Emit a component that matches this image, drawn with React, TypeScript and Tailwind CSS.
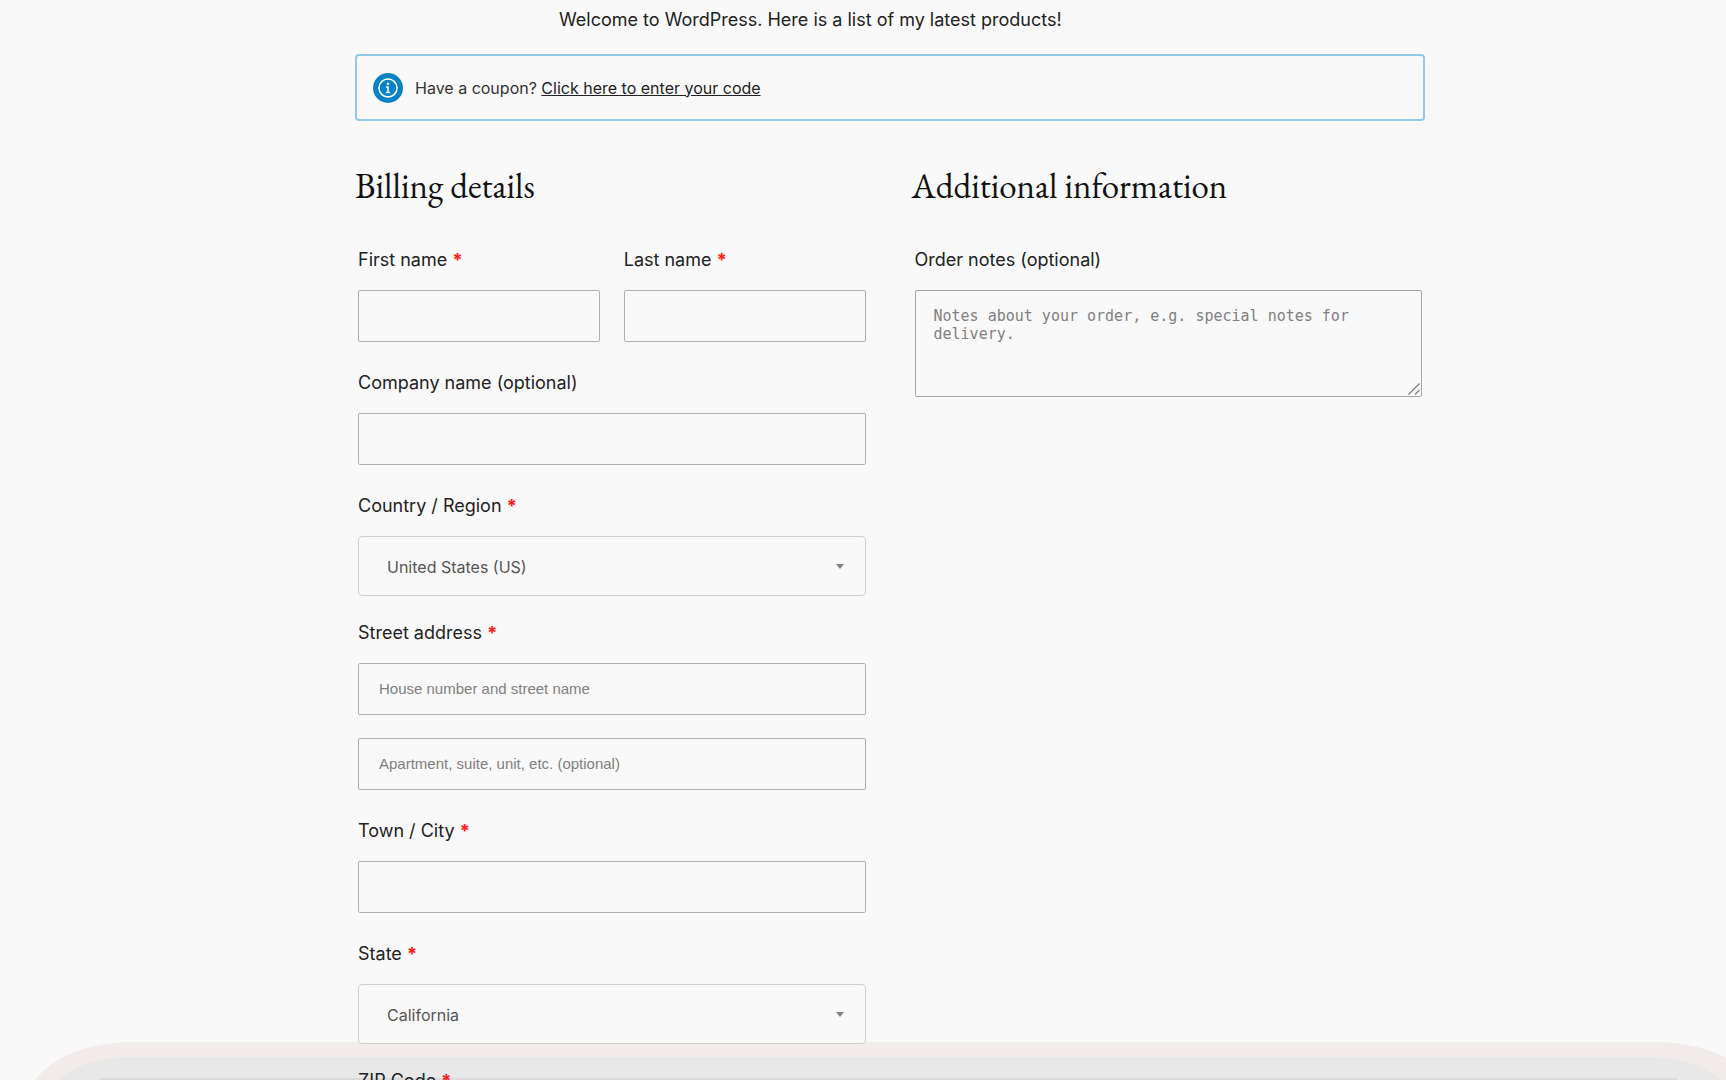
import type { ReactNode } from "react";

const inputClass =
  "block h-[52px] w-full rounded-xs border border-[#aeb0b0] bg-transparent px-5 pb-0.5 font-['Liberation_Sans',Arial,sans-serif] text-[15px] text-[#333] placeholder:text-[#808080] placeholder:opacity-100";

function Label({ htmlFor, required, children }: { htmlFor: string; required?: boolean; children: ReactNode }) {
  return (
    <label htmlFor={htmlFor} className="mb-[14px] block text-lg leading-8">
      {children}
      {required && <span className="ml-px font-extrabold text-[#ff1f1f]"> *</span>}
    </label>
  );
}

function TextField({ id, label, required }: { id: string; label: string; required?: boolean }) {
  return (
    <div className="mb-[25px]">
      <Label htmlFor={id} required={required}>{label}</Label>
      <input id={id} type="text" className={inputClass} />
    </div>
  );
}

function SelectField({ id, label, option }: { id: string; label: string; option: string }) {
  return (
    <div className="mb-[21px]">
      <Label htmlFor={id} required>{label}</Label>
      <div className="relative">
        <select
          id={id}
          className="block h-[60px] w-full appearance-none rounded-sm border border-[#cfd0d0] bg-[#f9f9f9] px-7 pt-0.5 text-base text-[#555]"
        >
          <option>{option}</option>
        </select>
        <svg viewBox="0 0 8 5" className="pointer-events-none absolute top-7 right-[22px] h-[5px] w-2" aria-hidden="true">
          <path d="M0 0h8L4 5z" fill="#858585" />
        </svg>
      </div>
    </div>
  );
}

function SectionTitle({ children }: { children: ReactNode }) {
  return (
    <h2 className="mb-[38px] font-['EB_Garamond','Liberation_Serif',serif] text-[35px] leading-10 text-[#111]">{children}</h2>
  );
}

export default function App() {
  return (
    <div className="relative h-screen overflow-hidden bg-[#f9f9f9] font-['Inter',sans-serif] text-[#222]">
      <div aria-hidden="true" className="pointer-events-none absolute inset-x-0 bottom-0 h-[38px] overflow-hidden">
        <div className="absolute top-0 right-[-34px] left-7 h-32 rounded-t-[105px_60px] bg-[#f1ebea]" />
        <div className="absolute top-[15px] right-[-9px] left-[45px] h-32 rounded-t-[85px_50px] bg-[#e8e8e8]" />
        <div className="absolute top-[36px] right-[49px] left-[100px] h-8 bg-[#dadada]" />
      </div>

      <main className="relative pr-[301px] pl-[355px]">
        <p className="pt-1 pl-[204px] text-lg leading-8">Welcome to WordPress. Here is a list of my latest products!</p>

        <div className="mt-[18px] flex h-[67px] items-center gap-3 rounded-sm border-2 border-[#93c9e6] px-4 text-base text-[#333]">
          <svg viewBox="0 0 30 30" className="size-[30px] shrink-0" aria-hidden="true">
            <circle cx="15" cy="15" r="15" fill="#0b83c2" />
            <circle cx="15" cy="15" r="9" fill="none" stroke="#fff" strokeWidth="1.5" />
            <circle cx="15" cy="10.7" r="1.3" fill="#fff" />
            <path d="M13 13.9h2v5.6M12.8 19.5h4.4" fill="none" stroke="#fff" strokeWidth="1.5" />
          </svg>
          <p>
            Have a coupon?{" "}
            <a href="#coupon" className="text-[#222] underline">Click here to enter your code</a>
          </p>
        </div>

        <form className="mt-[45px] grid grid-cols-2 gap-[43px]">
          <section>
            <SectionTitle>Billing details</SectionTitle>
            <div className="px-[3px]">
              <div className="grid grid-cols-2 gap-x-6">
                <TextField id="first-name" label="First name" required />
                <TextField id="last-name" label="Last name" required />
              </div>
              <TextField id="company" label="Company name (optional)" />
              <SelectField id="country" label="Country / Region" option="United States (US)" />
              <div className="mb-[25px]">
                <Label htmlFor="street" required>Street address</Label>
                <input id="street" type="text" placeholder="House number and street name" className={inputClass} />
                <input
                  type="text"
                  aria-label="Apartment, suite, unit, etc."
                  placeholder="Apartment, suite, unit, etc. (optional)"
                  className={`mt-[23px] ${inputClass}`}
                />
              </div>
              <TextField id="city" label="Town / City" required />
              <SelectField id="state" label="State" option="California" />
              <TextField id="zip" label="ZIP Code" required />
            </div>
          </section>

          <section>
            <SectionTitle>Additional information</SectionTitle>
            <div className="px-[3px]">
              <Label htmlFor="notes">Order notes (optional)</Label>
              <div className="relative">
                <textarea
                  id="notes"
                  placeholder="Notes about your order, e.g. special notes for delivery."
                  className="block h-[107px] w-full resize-none rounded-xs border border-[#a5a5a5] bg-transparent px-[18px] py-4 font-['DejaVu_Sans_Mono',monospace] text-[15px] leading-[18px] placeholder:text-[#808080] placeholder:opacity-100"
                />
                <svg viewBox="0 0 12 12" className="pointer-events-none absolute right-0.5 bottom-0.5 size-3" aria-hidden="true">
                  <path d="M0.5 11.5L11.5 0.5M7 11.5L11.5 7" stroke="#777" strokeWidth="1.1" />
                </svg>
              </div>
            </div>
          </section>
        </form>
      </main>
    </div>
  );
}
